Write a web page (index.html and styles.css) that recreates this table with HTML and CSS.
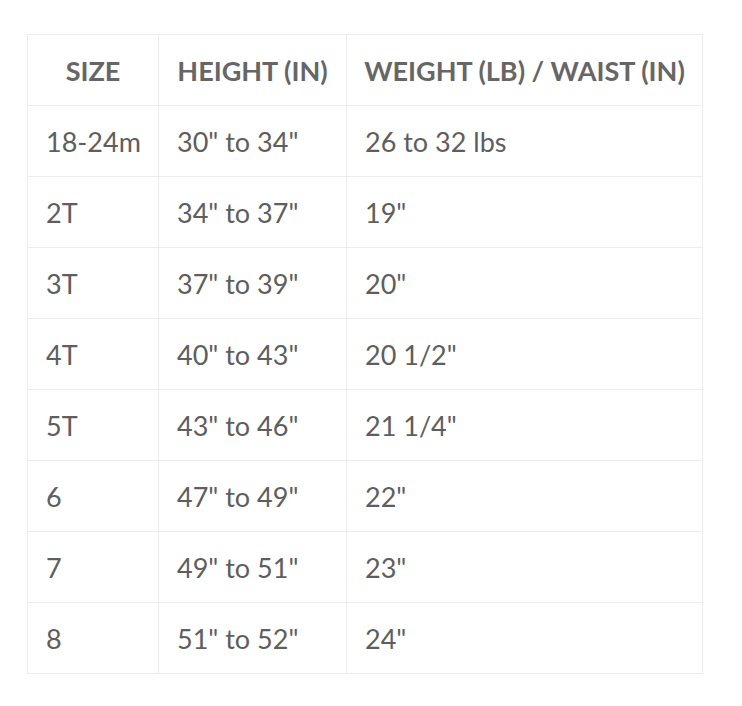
FILE: index.html
```html
<!DOCTYPE html>
<html>
<head>
<meta charset="utf-8">
<link rel="stylesheet" href="styles.css">
</head>
<body>
<table class="size-chart">
  <thead>
    <tr><th class="c1">SIZE</th><th class="c2">HEIGHT (IN)</th><th class="c3">WEIGHT (LB) / WAIST (IN)</th></tr>
  </thead>
  <tbody>
    <tr><td>18-24m</td><td>30" to 34"</td><td>26 to 32 lbs</td></tr>
    <tr><td>2T</td><td>34" to 37"</td><td>19"</td></tr>
    <tr><td>3T</td><td>37" to 39"</td><td>20"</td></tr>
    <tr><td>4T</td><td>40" to 43"</td><td>20 1/2"</td></tr>
    <tr><td>5T</td><td>43" to 46"</td><td>21 1/4"</td></tr>
    <tr><td>6</td><td>47" to 49"</td><td>22"</td></tr>
    <tr><td>7</td><td>49" to 51"</td><td>23"</td></tr>
    <tr><td>8</td><td>51" to 52"</td><td>24"</td></tr>
  </tbody>
</table>
</body>
</html>
```
FILE: styles.css
```css
html, body {
  margin: 0;
  background: #ffffff;
}
body {
  padding: 34px 0 0 27px;
  font-family: "Lato", "Liberation Sans", sans-serif;
  color: #5e5e5e;
}
.size-chart {
  border-collapse: collapse;
  table-layout: fixed;
  width: 676px;
}
.size-chart th,
.size-chart td {
  border: 1px solid #ececec;
  height: 70px;
  padding: 0 0 0 18px;
  text-align: left;
  font-size: 27px;
  vertical-align: middle;
  white-space: nowrap;
}
.size-chart th {
  font-weight: 700;
  font-size: 27px;
  color: #666666;
  text-align: center;
  padding: 0;
}
.size-chart td {
  font-weight: 400;
}
.c1 { width: 130px; }
.c2 { width: 187px; }
.c3 { width: auto; }
```
